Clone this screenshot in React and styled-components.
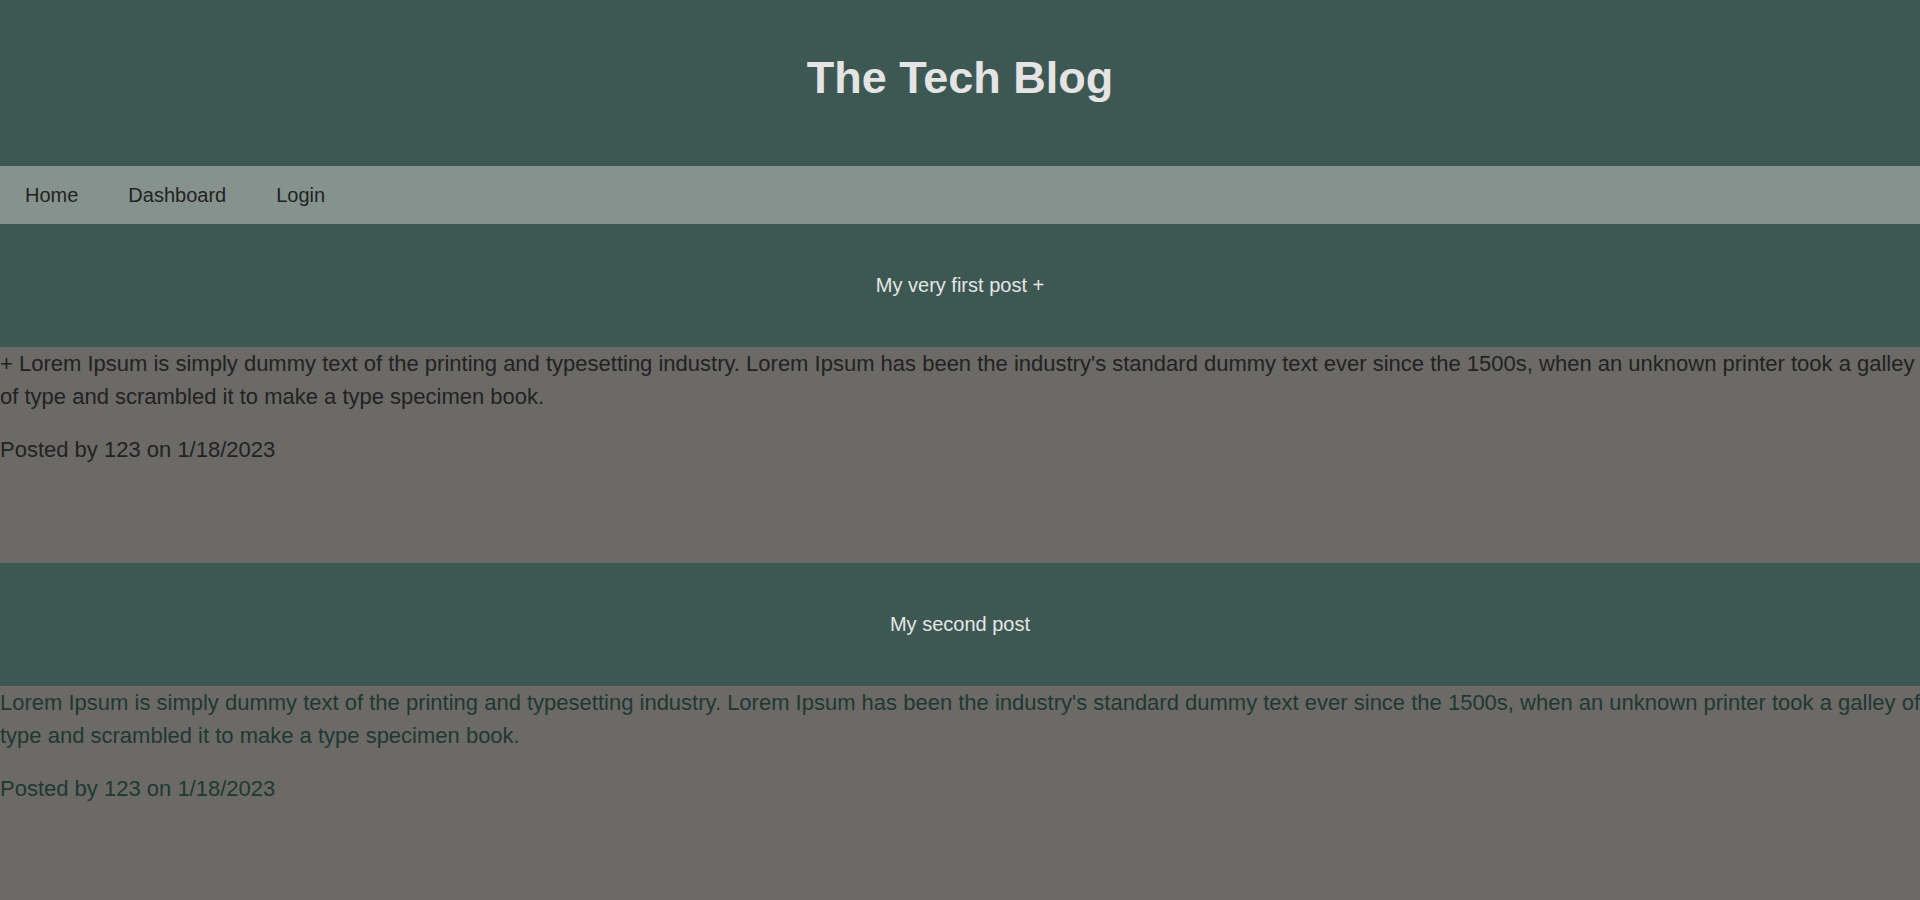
import React from "react";
import styled, { createGlobalStyle } from "styled-components";

const GlobalStyle = createGlobalStyle`
  html, body {
    margin: 0;
    padding: 0;
    background-color: #6b6a66;
    font-family: "Liberation Sans", Arial, sans-serif;
  }
`;

const Header = styled.header`
  background-color: #3d5853;
  padding: 52px 0 63px;
  text-align: center;
`;

const Title = styled.h1`
  margin: 0;
  font-size: 45px;
  font-weight: bold;
  color: #e4e4e4;
  line-height: 51px;
`;

const Nav = styled.nav`
  display: flex;
  align-items: center;
  height: 58px;
  background-color: #86928e;
`;

const NavLink = styled.a`
  display: block;
  padding: 0 25px;
  font-size: 20px;
  color: #222;
  text-decoration: none;
  cursor: pointer;
`;

const Post = styled.article`
  min-height: 339px;
`;

const PostHeader = styled.div`
  display: flex;
  justify-content: center;
  align-items: center;
  height: 123px;
  background-color: #3d5853;
`;

const PostTitle = styled.h2`
  margin: 0;
  font-size: 20px;
  font-weight: normal;
  color: #e6e6e6;
`;

const PostBody = styled.div`
  color: ${({ $tone }) => $tone};
  font-size: 22px;
  line-height: 33px;
  p {
    margin: 0 0 20px;
  }
`;

const posts = [
  {
    title: "My very first post +",
    body:
      "+ Lorem Ipsum is simply dummy text of the printing and typesetting industry. Lorem Ipsum has been the industry's standard dummy text ever since the 1500s, when an unknown printer took a galley of type and scrambled it to make a type specimen book.",
    author: "123",
    date: "1/18/2023",
    tone: "#222222",
  },
  {
    title: "My second post",
    body:
      "Lorem Ipsum is simply dummy text of the printing and typesetting industry. Lorem Ipsum has been the industry's standard dummy text ever since the 1500s, when an unknown printer took a galley of type and scrambled it to make a type specimen book.",
    author: "123",
    date: "1/18/2023",
    tone: "#1f3833",
  },
];

export default function App() {
  return (
    <>
      <GlobalStyle />
      <Header>
        <Title>The Tech Blog</Title>
      </Header>
      <Nav>
        <NavLink href="#">Home</NavLink>
        <NavLink href="#">Dashboard</NavLink>
        <NavLink href="#">Login</NavLink>
      </Nav>
      <main>
        {posts.map((post) => (
          <Post key={post.title}>
            <PostHeader>
              <PostTitle>{post.title}</PostTitle>
            </PostHeader>
            <PostBody $tone={post.tone}>
              <p>{post.body}</p>
              <p>
                Posted by {post.author} on {post.date}
              </p>
            </PostBody>
          </Post>
        ))}
      </main>
    </>
  );
}
